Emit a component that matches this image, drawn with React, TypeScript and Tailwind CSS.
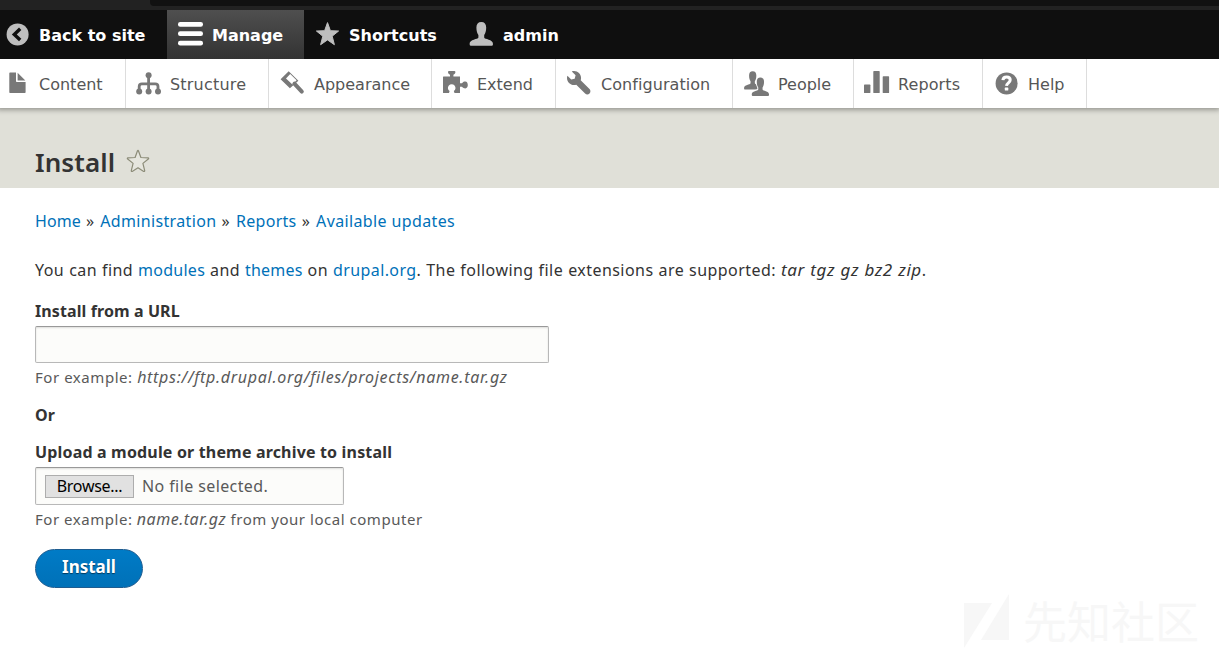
import type { ReactNode } from "react";

const PERSON =
  "M12.3 0C15.5 0 17.2 2 17.2 5.5C17.2 9 16.3 11.5 15.2 13V15.5C15.5 17.5 24 17 24 22Q24 23.7 23 23.7H1.6Q.6 23.7 .6 22C.6 17 9 17.5 9.4 15.5V13C8.3 11.5 7.4 9 7.4 5.5C7.4 2 9.1 0 12.3 0Z";

function Icon({ children }: { children: ReactNode }) {
  return (
    <svg width="25" height="25" viewBox="0 0 25 25" fill="currentColor" className="shrink-0 overflow-visible">
      {children}
    </svg>
  );
}

const BackIcon = () => (
  <Icon>
    <circle cx="12.6" cy="12.4" r="11" />
    <path d="M15.2 6.8L9.3 12.4L15.2 18" fill="none" stroke="#0f0f0f" strokeWidth="3.4" />
  </Icon>
);
const MenuIcon = () => (
  <Icon>
    <rect x="0" y="0" width="25" height="4.7" rx="2.2" />
    <rect x="0" y="9.3" width="25" height="4.7" rx="2.2" />
    <rect x="0" y="18.8" width="25" height="4.7" rx="2.2" />
  </Icon>
);
const StarIcon = () => (
  <Icon>
    <path
      d="M12.5 .6L15.4 8.7L23.6 9L17.2 14.2L19.4 22.7L12.5 17.9L5.6 22.7L7.8 14.2L1.4 9L9.6 8.7Z"
      stroke="currentColor"
      strokeWidth="1"
      strokeLinejoin="round"
    />
  </Icon>
);
const UserIcon = () => (
  <Icon>
    <path d={PERSON} />
  </Icon>
);
const FileIcon = () => (
  <Icon>
    <path d="M4.3 2.2Q4.3 1.5 5 1.5H11V10.2Q11 11 11.8 11H20.6V21.3Q20.6 22 19.9 22H5Q4.3 22 4.3 21.3Z" />
    <path d="M12.6 1.7L20.3 9.4H12.6Z" />
  </Icon>
);
const StructureIcon = () => (
  <Icon>
    <circle cx="12.6" cy="4.3" r="3" />
    <circle cx="3.2" cy="20.4" r="3" />
    <circle cx="12.6" cy="20.4" r="3" />
    <circle cx="22" cy="20.4" r="3" />
    <path
      d="M12.6 4V20M3.2 20V15.5Q3.2 12.8 6 12.8H19.2Q22 12.8 22 15.5V20"
      fill="none"
      stroke="currentColor"
      strokeWidth="2.8"
    />
  </Icon>
);
const BrushIcon = () => (
  <Icon>
    <path
      fillRule="evenodd"
      d="M8.7 .3L.6 8.2L9.9 17.3L18.4 9.7ZM10.2 3L16.6 9.2L12.4 13.6L6 7.6Z"
    />
    <path d="M14.4 12.6L21.8 20.6" stroke="currentColor" strokeWidth="4" strokeLinecap="round" />
  </Icon>
);
const PuzzleIcon = () => (
  <Icon>
    <path d="M.5 5.5H7V3.7C6 3 5 2.5 5 1Q5 0 6 0H11.4Q12.4 0 12.4 1C12.4 2.5 11.4 3 10.4 3.7V5.5H17V12.3H19C20 11 21 10.6 22.3 10.6C24 10.6 24.8 12.3 24.8 14C24.8 15.7 24 17.4 22.3 17.4C21 17.4 20 17 19 15.8H17V22H11.5L10.8 20.1A3.8 3.8 0 1 0 6.6 20.1L6 22H.5Q0 22 0 21.5V6Q0 5.5 .5 5.5Z" />
  </Icon>
);
const WrenchIcon = () => (
  <Icon>
    <path
      transform="scale(1.5625)"
      d="M14.416 11.586l-.01-.008v-.001l-5.656-5.656c.15-.449.252-.921.252-1.421 0-2.485-2.016-4.5-4.502-4.5-.505 0-.981.102-1.434.255l2.431 2.431-.588 2.196-2.196.588-2.445-2.445c-.162.464-.268.956-.268 1.475 0 2.486 2.014 4.5 4.5 4.5.5 0 .972-.102 1.421-.251l5.667 5.665c.781.781 2.047.781 2.828 0s.781-2.047 0-2.828z"
    />
  </Icon>
);
const PeopleIcon = () => (
  <Icon>
    <path d={PERSON} transform="translate(-.4 .3) scale(.74 .77)" />
    <path
      d={PERSON}
      transform="translate(7.3 6.4) scale(.74 .78)"
      stroke="#fff"
      strokeWidth="2.6"
      paintOrder="stroke"
    />
  </Icon>
);
const ChartIcon = () => (
  <Icon>
    <rect x="0" y="13.5" width="6.4" height="8.6" rx=".7" />
    <rect x="9.3" y="0" width="6.4" height="22.1" rx=".7" />
    <rect x="18.7" y="5.3" width="6.4" height="16.8" rx=".7" />
  </Icon>
);
const HelpIcon = () => (
  <Icon>
    <circle cx="12.6" cy="12.4" r="11" />
    <path d="M8.9 9.2C9.4 4.9 16.2 5.2 16.2 9.1C16.2 11.8 12.7 11.9 12.5 14.9" fill="none" stroke="#fff" strokeWidth="3" />
    <rect x="10.8" y="16.6" width="3.5" height="3" rx=".6" fill="#fff" />
  </Icon>
);

const tray = [
  { label: "Content", icon: <FileIcon />, box: "w-[126px] pl-[5px]" },
  { label: "Structure", icon: <StructureIcon />, box: "w-[143px] pl-[10px] tracking-[0.2px]" },
  { label: "Appearance", icon: <BrushIcon />, box: "w-[163px] pl-[11px]" },
  { label: "Extend", icon: <PuzzleIcon />, box: "w-[124px] pl-[11px]" },
  { label: "Configuration", icon: <WrenchIcon />, box: "w-[177px] pl-[11px] tracking-[0.06px]" },
  { label: "People", icon: <PeopleIcon />, box: "w-[121px] pl-[11px]" },
  { label: "Reports", icon: <ChartIcon />, box: "w-[129px] pl-[10px] tracking-[0.1px]" },
  { label: "Help", icon: <HelpIcon />, box: "w-[104px] pl-[11px]" },
];

function Link({ children, className = "" }: { children: ReactNode; className?: string }) {
  return (
    <a href="#" className={`text-[#0071b8] ${className}`}>
      {children}
    </a>
  );
}

export default function App() {
  return (
    <div className="flex h-[654px] w-full flex-col overflow-hidden bg-white font-['Noto_Sans','Liberation_Sans',sans-serif] text-base text-[#333]">
      <div className="flex h-[10px] shrink-0 items-start bg-[#222] pl-[150px]">
        <div className="h-[6px] flex-1 rounded-bl-sm bg-[#111]" />
      </div>

      <nav className="flex h-[49px] shrink-0 bg-[#0f0f0f] font-['DejaVu_Sans',sans-serif] font-bold text-white">
        <a href="#" className="flex w-[167px] items-center gap-[9px] pl-[5px]">
          <span className="flex text-[#bebebe]"><BackIcon /></span>
          <span className="pt-[2px]">Back to site</span>
        </a>
        <a href="#" className="flex w-[137px] items-center gap-[9px] bg-linear-to-b from-[#4f4f4f] to-[#333] pl-[11px]">
          <MenuIcon />
          <span className="pt-[2px]">Manage</span>
        </a>
        <a href="#" className="flex w-[154px] items-center gap-[9px] pl-[11px]">
          <span className="flex text-[#bebebe]"><StarIcon /></span>
          <span className="pt-[2px] tracking-[0.05px]">Shortcuts</span>
        </a>
        <a href="#" className="flex items-center gap-[9px] pl-[11px]">
          <span className="flex text-[#bebebe]"><UserIcon /></span>
          <span className="pt-[2px]">admin</span>
        </a>
      </nav>

      <nav className="relative z-10 flex h-[49px] shrink-0 bg-white font-['DejaVu_Sans',sans-serif] text-[#565656] shadow-[-1px_0_5px_2px_rgba(0,0,0,0.3333)] [clip-path:inset(0_0_-10px_0)]">
        {tray.map((item) => (
          <a
            key={item.label}
            href="#"
            className={`flex items-center gap-[9px] border-r border-[#ddd] ${item.box}`}
          >
            <span className="flex text-[#787878]">{item.icon}</span>
            <span className="pt-[2px]">{item.label}</span>
          </a>
        ))}
      </nav>

      <header className="flex h-[80px] shrink-0 items-start gap-[10px] bg-[#e0e0d8] pl-[35px] pt-[36px]">
        <h1 className="text-[26px] font-semibold leading-[36px] tracking-[0.08px]">Install</h1>
        <svg width="25" height="25" viewBox="0 0 25 25" className="mt-[5px]" fill="#e6e6de" stroke="#8c8c78" strokeWidth="1.2" strokeLinejoin="round">
          <path d="M12.5 1.8Q13 1 13.5 2L15.9 8.5L23 8.9Q24.2 9.2 23.3 10L17.9 14.4L19.7 21.6Q19.8 22.8 18.7 22.4L13 18.8L7.2 22.4Q6.1 22.8 6.3 21.6L8.1 14.4L2.7 10Q1.8 9.2 3 8.9L10.1 8.5Z" />
        </svg>
      </header>

      <main className="flex flex-1 flex-col items-start pl-[35px] pt-[21px]">
        <div className="h-[24px] whitespace-pre leading-[24px] tracking-[1px]">
          <Link className="tracking-[0.05px]">Home</Link> » <Link className="tracking-[0.35px]">Administration</Link> »{" "}
          <Link className="tracking-[0.3px]">Reports</Link> »{" "}
          <Link className="tracking-[0.37px]">Available updates</Link>
        </div>

        <p className="mt-[25px] h-[24px] whitespace-pre leading-[24px] tracking-[0.45px] [word-spacing:0.35px]">
          You can find <Link className="tracking-[0.25px]">modules</Link> and{" "}
          <Link className="tracking-[0.2px]">themes</Link> on{" "}
          <Link className="tracking-[0.4px]">drupal.org</Link>. The following file extensions are supported:{" "}
          <em className="text-[17px] tracking-[0.6px]">tar tgz gz bz2 zip</em>.
        </p>

        <label htmlFor="project-url" className="mt-[17px] h-[24px] font-bold leading-[24px] tracking-[0.1px]">
          Install from a URL
        </label>
        <input
          id="project-url"
          type="text"
          className="mt-[3px] h-[37px] w-[514px] rounded-[2px] border border-[#b8b8b8] border-t-[#999] bg-[#fcfcfa] shadow-[inset_0_1px_2px_rgba(0,0,0,0.125)]"
        />
        <div className="mt-[2px] h-[24px] whitespace-pre text-[15px] leading-[24px] tracking-[0.55px] text-[#595959]">
          For example: <em className="text-[16px] tracking-[0.7px]">https://ftp.drupal.org/files/projects/name.tar.gz</em>
        </div>

        <div className="mt-[14px] h-[24px] font-bold leading-[24px]">Or</div>

        <div className="mt-[13px] h-[24px] font-bold leading-[24px] tracking-[0.17px]">
          Upload a module or theme archive to install
        </div>
        <div className="mt-[3px] flex h-[38px] w-[309px] items-center rounded-[2px] border border-[#b8b8b8] border-t-[#999] bg-[#fcfcfa] pl-[9px] shadow-[inset_0_1px_2px_rgba(0,0,0,0.125)]">
          <button className="h-[23px] w-[89px] border border-[#adadad] bg-[#e1e1e1] text-[16px] leading-[21px] tracking-[-0.3px] text-black">
            Browse...
          </button>
          <span className="ml-[8px] tracking-[0.4px] text-[#595959]">No file selected.</span>
        </div>
        <div className="mt-[2px] h-[24px] whitespace-pre text-[15px] leading-[24px] tracking-[0.53px] text-[#595959]">
          For example: <em className="text-[16px] tracking-[0.5px]">name.tar.gz</em> from your local computer
        </div>

        <button className="mt-[18px] h-[39px] w-[108px] rounded-full border border-[#1e5c90] bg-linear-to-b from-[#007bc6] to-[#0071b8] pb-[3px] text-[17px] font-bold leading-[34px] text-white [text-shadow:0_1px_1px_rgba(0,0,0,0.5)]">
          Install
        </button>
      </main>

      <div className="absolute left-[964px] top-[594px] flex gap-[14px] text-[#f7f7f7]">
        <svg width="45" height="54" viewBox="0 0 45 54" fill="currentColor">
          <path d="M0 9H28L0 54ZM45 0V46H17Z" />
        </svg>
        <span className="font-['Noto_Sans_CJK_SC',sans-serif] text-[44px] leading-[52px]">先知社区</span>
      </div>
    </div>
  );
}
